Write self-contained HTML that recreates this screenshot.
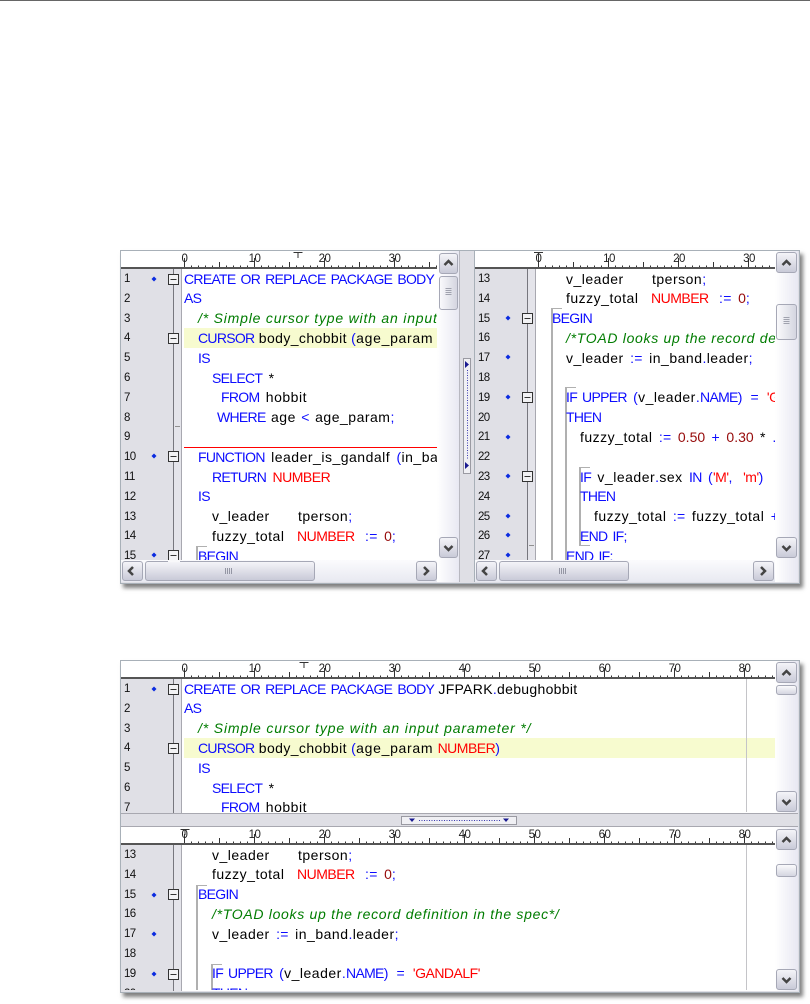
<!DOCTYPE html>
<html><head><meta charset="utf-8"><style>
html,body{margin:0;padding:0;background:#fff;width:810px;height:1004px;overflow:hidden}
#w{position:relative;width:810px;height:1004px;overflow:hidden;font-family:"Liberation Sans",sans-serif}
.a{position:absolute}
.clip{position:absolute;left:0;top:0;width:810px;height:1004px}
.t{position:absolute;white-space:pre;font-size:14px;line-height:20px;color:#000;letter-spacing:.5px;word-spacing:2px;margin-top:-.4px;filter:blur(.35px)}
.k{color:#0c0cff;letter-spacing:-.7px;word-spacing:1.8px}
.r{color:#ff0000;letter-spacing:-.5px}
.n{color:#960a0a;letter-spacing:0}
.g{color:#007c00;font-style:italic;letter-spacing:.8px;word-spacing:0}
.p{color:#0c0cff;letter-spacing:.3px}
.e{margin:0 1.5px}
.ln{position:absolute;font-size:11.5px;line-height:20px;color:#111;letter-spacing:-.6px;white-space:pre;filter:blur(.25px)}
.track-v{position:absolute;background:linear-gradient(90deg,#fff,#e8e8f2)}
.track-h{position:absolute;background:linear-gradient(180deg,#fbfbfd,#e8e9f1)}
.btn{position:absolute;box-sizing:border-box;border:1px solid #a6a8b6;border-radius:3px;background:linear-gradient(180deg,#f4f4f8,#c9cad8)}
.gut{position:absolute;background:#e0e0e6}
.band{position:absolute;background:#e4e4ea}
</style></head><body><div id="w">
<div class="a" style="left:0;top:0;width:810px;height:1px;background:#666"></div>

<!-- group frames -->
<div class="a" style="left:120px;top:250px;width:678px;height:332px;background:#dfdfe5;border:1px solid #a8b0b8;box-shadow:3px 4px 4px rgba(0,0,0,.5)"></div>
<div class="a" style="left:120px;top:660px;width:678px;height:331px;background:#dfdfe5;border:1px solid #a8b0b8;box-shadow:3px 4px 4px rgba(0,0,0,.5)"></div>

<!-- pane backgrounds -->
<div class="a" style="left:121px;top:251px;width:316px;height:310px;background:#fff"></div>
<div class="a" style="left:459px;top:251px;width:1px;height:331px;background:#b8b8c0"></div>
<div class="a" style="left:474px;top:251px;width:1px;height:331px;background:#a8b0b8"></div>
<div class="a" style="left:475px;top:251px;width:300px;height:310px;background:#fff"></div>
<div class="a" style="left:121px;top:661px;width:654px;height:152px;background:#fff"></div>
<div class="a" style="left:121px;top:827px;width:654px;height:164px;background:#fff"></div>
<div class="a" style="left:121px;top:813px;width:677px;height:1px;background:#a8a8b0"></div>
<div class="a" style="left:121px;top:826px;width:677px;height:1px;background:#a8a8b0"></div>

<!-- gutters -->
<div class="gut" style="left:121px;top:269px;width:52px;height:291px"></div>
<div class="band" style="left:174px;top:269px;width:7px;height:291px"></div>
<div class="a" style="left:173px;top:269px;width:1px;height:291px;background:#77777e"></div>
<div class="a" style="left:181px;top:269px;width:1px;height:291px;background:#a8a8b0"></div>

<div class="gut" style="left:475px;top:269px;width:52px;height:291px"></div>
<div class="band" style="left:528px;top:269px;width:7px;height:291px"></div>
<div class="a" style="left:527px;top:269px;width:1px;height:291px;background:#77777e"></div>
<div class="a" style="left:535px;top:269px;width:1px;height:291px;background:#a8a8b0"></div>

<div class="gut" style="left:121px;top:679px;width:52px;height:134px"></div>
<div class="band" style="left:174px;top:679px;width:7px;height:134px"></div>
<div class="a" style="left:173px;top:679px;width:1px;height:134px;background:#77777e"></div>
<div class="a" style="left:181px;top:679px;width:1px;height:134px;background:#a8a8b0"></div>

<div class="gut" style="left:121px;top:845px;width:52px;height:146px"></div>
<div class="band" style="left:174px;top:845px;width:7px;height:146px"></div>
<div class="a" style="left:173px;top:845px;width:1px;height:146px;background:#77777e"></div>
<div class="a" style="left:181px;top:845px;width:1px;height:146px;background:#a8a8b0"></div>

<!-- PANE 1 -->
<div class="clip" style="clip-path:inset(269px 373px 444px 121px)">
<div class="a" style="left:184px;top:328px;width:253px;height:20px;background:#f7fbcf"></div>
<div class="a" style="left:184px;top:447px;width:253px;height:1px;background:#ff0000"></div>
<div class="a" style="left:196px;top:546px;width:2px;height:14px;background:#b0b0b0"></div>
<div class="a" style="left:196px;top:546px;width:11px;height:1px;background:#b0b0b0"></div>
<div class="a" style="left:175px;top:426px;width:5px;height:1px;background:#909090"></div>
<div class="ln" style="left:124px;top:269px">1</div>
<div class="ln" style="left:124px;top:288.8px">2</div>
<div class="ln" style="left:124px;top:308.6px">3</div>
<div class="ln" style="left:124px;top:328.4px">4</div>
<div class="ln" style="left:124px;top:348.2px">5</div>
<div class="ln" style="left:124px;top:368px">6</div>
<div class="ln" style="left:124px;top:387.8px">7</div>
<div class="ln" style="left:124px;top:407.6px">8</div>
<div class="ln" style="left:124px;top:427.4px">9</div>
<div class="ln" style="left:124px;top:447.2px">10</div>
<div class="ln" style="left:124px;top:467px">11</div>
<div class="ln" style="left:124px;top:486.8px">12</div>
<div class="ln" style="left:124px;top:506.6px">13</div>
<div class="ln" style="left:124px;top:526.4px">14</div>
<div class="ln" style="left:124px;top:546.2px">15</div>
<div class="t" style="left:184px;top:269px"><span class="k">CREATE OR REPLACE PACKAGE BODY</span></div>
<div class="t" style="left:184px;top:288.8px"><span class="k">AS</span></div>
<div class="t" style="left:198px;top:308.6px"><span class="g">/* Simple cursor type with an input</span></div>
<div class="t" style="left:198px;top:328.4px;word-spacing:0;letter-spacing:.4px"><span class="k">CURSOR</span> body_chobbit <span class="p">(</span><span style="letter-spacing:.7px">age_param</span></div>
<div class="t" style="left:198px;top:348.2px"><span class="k">IS</span></div>
<div class="t" style="left:212px;top:368px"><span class="k">SELECT</span> *</div>
<div class="t" style="left:221px;top:387.8px"><span class="k">FROM</span> hobbit</div>
<div class="t" style="left:217px;top:407.6px;word-spacing:1px"><span class="k">WHERE</span> age <span class="p">&lt;</span> age_param<span class="p">;</span></div>
<div class="t" style="left:198px;top:447.2px"><span class="k">FUNCTION</span> leader_is_gandalf <span class="p">(</span>in_band</div>
<div class="t" style="left:212px;top:467px"><span class="k">RETURN</span> <span class="r">NUMBER</span></div>
<div class="t" style="left:198px;top:486.8px"><span class="k">IS</span></div>
<div class="t" style="left:212px;top:506.6px">v_leader</div>
<div class="t" style="left:298px;top:506.6px">tperson<span class="p">;</span></div>
<div class="t" style="left:212px;top:526.4px">fuzzy_total</div>
<div class="t" style="left:297px;top:526.4px"><span class="r">NUMBER</span></div>
<div class="t" style="left:365px;top:526.4px"><span class="p">:=</span> <span class="n">0</span><span class="p">;</span></div>
<div class="t" style="left:198px;top:546.2px"><span class="k">BEGIN</span></div>
</div>

<!-- PANE 2 -->
<div class="clip" style="clip-path:inset(269px 35px 444px 475px)">
<div class="a" style="left:551px;top:308px;width:2px;height:252px;background:#b0b0b0"></div>
<div class="a" style="left:551px;top:308px;width:11px;height:1px;background:#b0b0b0"></div>
<div class="a" style="left:565px;top:387px;width:2px;height:173px;background:#b0b0b0"></div>
<div class="a" style="left:565px;top:387px;width:11px;height:1px;background:#b0b0b0"></div>
<div class="a" style="left:579px;top:467px;width:2px;height:78px;background:#b0b0b0"></div>
<div class="a" style="left:579px;top:467px;width:11px;height:1px;background:#b0b0b0"></div>
<div class="a" style="left:579px;top:545px;width:11px;height:1px;background:#b0b0b0"></div>
<div class="a" style="left:529px;top:545px;width:5px;height:1px;background:#909090"></div>
<div class="ln" style="left:478px;top:269px">13</div>
<div class="ln" style="left:478px;top:288.8px">14</div>
<div class="ln" style="left:478px;top:308.6px">15</div>
<div class="ln" style="left:478px;top:328.4px">16</div>
<div class="ln" style="left:478px;top:348.2px">17</div>
<div class="ln" style="left:478px;top:368px">18</div>
<div class="ln" style="left:478px;top:387.8px">19</div>
<div class="ln" style="left:478px;top:407.6px">20</div>
<div class="ln" style="left:478px;top:427.4px">21</div>
<div class="ln" style="left:478px;top:447.2px">22</div>
<div class="ln" style="left:478px;top:467px">23</div>
<div class="ln" style="left:478px;top:486.8px">24</div>
<div class="ln" style="left:478px;top:506.6px">25</div>
<div class="ln" style="left:478px;top:526.4px">26</div>
<div class="ln" style="left:478px;top:546.2px">27</div>
<div class="t" style="left:566px;top:269px">v_leader</div>
<div class="t" style="left:652px;top:269px">tperson<span class="p">;</span></div>
<div class="t" style="left:566px;top:288.8px">fuzzy_total</div>
<div class="t" style="left:651px;top:288.8px"><span class="r">NUMBER</span></div>
<div class="t" style="left:719px;top:288.8px"><span class="p">:=</span> <span class="n">0</span><span class="p">;</span></div>
<div class="t" style="left:552px;top:308.6px"><span class="k">BEGIN</span></div>
<div class="t" style="left:566px;top:328.4px"><span class="g" style="letter-spacing:.7px">/*TOAD looks up the record definition</span></div>
<div class="t" style="left:566px;top:348.2px">v_leader <span class="p">:=</span> in_band<span class="p">.</span>leader<span class="p">;</span></div>
<div class="t" style="left:566px;top:387.8px"><span class="k">IF UPPER</span> <span class="p">(</span>v_leader<span class="p">.</span><span class="k">NAME</span><span class="p">)</span> <span class="p e">=</span> <span class="r">'GANDALF'</span></div>
<div class="t" style="left:566px;top:407.6px"><span class="k">THEN</span></div>
<div class="t" style="left:580px;top:427.4px">fuzzy_total <span class="p">:=</span> <span class="n">0.50</span> <span class="p">+</span> <span class="n">0.30</span> * <span class="p">.</span></div>
<div class="t" style="left:580px;top:467px"><span class="k">IF</span> v_leader<span class="p">.</span>sex <span class="k">IN</span> <span class="p">(</span><span class="r">'M'</span><span class="p">,</span> <span class="r" style="margin-left:4px">'m'</span><span class="p">)</span></div>
<div class="t" style="left:580px;top:486.8px"><span class="k">THEN</span></div>
<div class="t" style="left:594px;top:506.6px">fuzzy_total <span class="p">:=</span> fuzzy_total <span class="p">+</span></div>
<div class="t" style="left:580px;top:526.4px"><span class="k">END IF</span><span class="p">;</span></div>
<div class="t" style="left:566px;top:546.2px"><span class="k">END IF</span><span class="p">;</span></div>
</div>

<!-- PANE 3 -->
<div class="clip" style="clip-path:inset(679px 35px 192px 121px)">
<div class="a" style="left:184px;top:738px;width:591px;height:20px;background:#f7fbcf"></div>
<div class="a" style="left:746px;top:679px;width:1px;height:134px;background:#c4c4c8"></div>
<div class="ln" style="left:124px;top:679px">1</div>
<div class="ln" style="left:124px;top:698.8px">2</div>
<div class="ln" style="left:124px;top:718.6px">3</div>
<div class="ln" style="left:124px;top:738.4px">4</div>
<div class="ln" style="left:124px;top:758.2px">5</div>
<div class="ln" style="left:124px;top:778px">6</div>
<div class="ln" style="left:124px;top:797.8px">7</div>
<div class="t" style="left:184px;top:679px;letter-spacing:.3px;word-spacing:0"><span class="k" style="word-spacing:1.8px">CREATE OR REPLACE PACKAGE BODY</span> JFPARK<span class="p">.</span>debughobbit</div>
<div class="t" style="left:184px;top:698.8px"><span class="k">AS</span></div>
<div class="t" style="left:198px;top:718.6px"><span class="g" style="letter-spacing:.85px">/* Simple cursor type with an input parameter */</span></div>
<div class="t" style="left:198px;top:738.4px;word-spacing:0;letter-spacing:.4px"><span class="k">CURSOR</span> body_chobbit <span class="p">(</span><span style="letter-spacing:.7px">age_param</span> <span class="r">NUMBER</span><span class="p">)</span></div>
<div class="t" style="left:198px;top:758.2px"><span class="k">IS</span></div>
<div class="t" style="left:212px;top:778px"><span class="k">SELECT</span> *</div>
<div class="t" style="left:221px;top:797.8px"><span class="k">FROM</span> hobbit</div>
</div>

<!-- PANE 4 -->
<div class="clip" style="clip-path:inset(845px 35px 14px 121px)">
<div class="a" style="left:746px;top:845px;width:1px;height:146px;background:#c4c4c8"></div>
<div class="a" style="left:196px;top:885px;width:2px;height:106px;background:#b0b0b0"></div>
<div class="a" style="left:196px;top:885px;width:11px;height:1px;background:#b0b0b0"></div>
<div class="a" style="left:211px;top:964px;width:2px;height:27px;background:#b0b0b0"></div>
<div class="a" style="left:211px;top:964px;width:11px;height:1px;background:#b0b0b0"></div>
<div class="ln" style="left:124px;top:845px">13</div>
<div class="ln" style="left:124px;top:864.8px">14</div>
<div class="ln" style="left:124px;top:884.6px">15</div>
<div class="ln" style="left:124px;top:904.4px">16</div>
<div class="ln" style="left:124px;top:924.2px">17</div>
<div class="ln" style="left:124px;top:944px">18</div>
<div class="ln" style="left:124px;top:963.8px">19</div>
<div class="ln" style="left:124px;top:983.6px">20</div>
<div class="t" style="left:212px;top:845px">v_leader</div>
<div class="t" style="left:298px;top:845px">tperson<span class="p">;</span></div>
<div class="t" style="left:212px;top:864.8px">fuzzy_total</div>
<div class="t" style="left:297px;top:864.8px"><span class="r">NUMBER</span></div>
<div class="t" style="left:365px;top:864.8px"><span class="p">:=</span> <span class="n">0</span><span class="p">;</span></div>
<div class="t" style="left:198px;top:884.6px"><span class="k">BEGIN</span></div>
<div class="t" style="left:212px;top:904.4px"><span class="g" style="letter-spacing:.7px">/*TOAD looks up the record definition in the spec*/</span></div>
<div class="t" style="left:212px;top:924.2px">v_leader <span class="p">:=</span> in_band<span class="p">.</span>leader<span class="p">;</span></div>
<div class="t" style="left:212px;top:963.8px"><span class="k">IF UPPER</span> <span class="p">(</span>v_leader<span class="p">.</span><span class="k">NAME</span><span class="p">)</span> <span class="p e">=</span> <span class="r">'GANDALF'</span></div>
<div class="t" style="left:212px;top:983.6px"><span class="k">THEN</span></div>
</div>

<!-- scroll tracks -->
<div class="track-v" style="left:437px;top:251px;width:22px;height:331px"></div>
<div class="track-v" style="left:775px;top:251px;width:23px;height:331px"></div>
<div class="track-h" style="left:121px;top:560px;width:316px;height:22px"></div>
<div class="track-h" style="left:475px;top:560px;width:300px;height:22px"></div>
<div class="track-v" style="left:775px;top:661px;width:23px;height:152px"></div>
<div class="track-v" style="left:775px;top:827px;width:23px;height:164px"></div>

<!-- thumbs -->
<div class="btn" style="left:439px;top:276px;width:19px;height:34px;background:linear-gradient(90deg,#fafafc,#d4d5e0)"></div>
<div class="btn" style="left:776px;top:304px;width:21px;height:36px;background:linear-gradient(90deg,#fafafc,#d4d5e0)"></div>
<div class="btn" style="left:776px;top:685px;width:21px;height:10px;background:linear-gradient(180deg,#fafafc,#d4d5e0)"></div>
<div class="btn" style="left:776px;top:864px;width:21px;height:13px;background:linear-gradient(180deg,#fafafc,#d4d5e0)"></div>
<div class="btn" style="left:145px;top:561px;width:170px;height:20px;background:linear-gradient(180deg,#f4f4f8,#c9cad8)"></div>
<div class="btn" style="left:499px;top:561px;width:130px;height:20px;background:linear-gradient(180deg,#f4f4f8,#c9cad8)"></div>

<!-- buttons -->
<div class="btn" style="left:439px;top:253px;width:19px;height:21px"></div>
<div class="btn" style="left:439px;top:537px;width:19px;height:21px"></div>
<div class="btn" style="left:776px;top:252px;width:21px;height:21px"></div>
<div class="btn" style="left:776px;top:537px;width:21px;height:21px"></div>
<div class="btn" style="left:776px;top:662px;width:21px;height:21px"></div>
<div class="btn" style="left:776px;top:791px;width:21px;height:21px"></div>
<div class="btn" style="left:776px;top:829px;width:21px;height:21px"></div>
<div class="btn" style="left:776px;top:969px;width:21px;height:21px"></div>
<div class="btn" style="left:122px;top:561px;width:21px;height:20px"></div>
<div class="btn" style="left:416px;top:561px;width:21px;height:20px"></div>
<div class="btn" style="left:476px;top:561px;width:21px;height:20px"></div>
<div class="btn" style="left:753px;top:561px;width:21px;height:20px"></div>

<!-- splitter grips -->
<div class="a" style="left:463px;top:358px;width:8px;height:116px;box-sizing:border-box;border:1px solid #9a9aa2;background:#f0f0f4"></div>
<div class="a" style="left:401px;top:816px;width:116px;height:9px;box-sizing:border-box;border:1px solid #9a9aa2;background:#f0f0f4"></div>

<svg class="a" style="left:0;top:0" width="810" height="1004" viewBox="0 0 810 1004">
<defs>
<pattern id="tk" width="70" height="10" patternUnits="userSpaceOnUse">
<path d="M0.5 0V10M7.5 7.5V10M14.5 7.5V10M21.5 7.5V10M28.5 7.5V10M35.5 4V10M42.5 7.5V10M49.5 7.5V10M56.5 7.5V10M63.5 7.5V10" stroke="#333" stroke-width="1" fill="none"/>
</pattern>
<pattern id="p1" width="70" height="10" patternUnits="userSpaceOnUse" patternTransform="translate(184 258)"><rect width="70" height="10" fill="url(#tk)"/></pattern>
<pattern id="p2" width="70" height="10" patternUnits="userSpaceOnUse" patternTransform="translate(538 258)"><rect width="70" height="10" fill="url(#tk)"/></pattern>
<pattern id="p3" width="70" height="10" patternUnits="userSpaceOnUse" patternTransform="translate(184 668)"><rect width="70" height="10" fill="url(#tk)"/></pattern>
<pattern id="p4" width="70" height="10" patternUnits="userSpaceOnUse" patternTransform="translate(184 834)"><rect width="70" height="10" fill="url(#tk)"/></pattern>
<g id="dm"><path d="M0 -2.5L2.5 0L0 2.5L-2.5 0Z" fill="#0a2be0"/></g>
<g id="fb"><rect x="0.5" y="0.5" width="10" height="10" fill="#f2f2f4" stroke="#333"/><path d="M2.5 5.5H8.5" stroke="#333"/></g>
<path id="up" d="M-4 2L0 -2L4 2" stroke="#444" stroke-width="2.5" fill="none"/>
<path id="dn" d="M-4 -2L0 2L4 -2" stroke="#444" stroke-width="2.5" fill="none"/>
<path id="lf" d="M2 -4L-2 0L2 4" stroke="#444" stroke-width="2.5" fill="none"/>
<path id="rt" d="M-2 -4L2 0L-2 4" stroke="#444" stroke-width="2.5" fill="none"/>
<g id="gv"><path d="M-3 -3.5H3M-3 -1.5H3M-3 .5H3M-3 2.5H3" stroke="#a0a2ae"/></g>
<g id="gh"><path d="M-3.5 -3V3M-1.5 -3V3M.5 -3V3M2.5 -3V3" stroke="#9496a4"/></g>
</defs>

<!-- rulers -->
<rect x="184" y="258" width="253" height="10" fill="url(#p1)"/>
<rect x="121" y="267" width="316" height="2" fill="#555"/>
<rect x="538" y="258" width="237" height="10" fill="url(#p2)"/>
<rect x="475" y="267" width="300" height="2" fill="#555"/>
<rect x="184" y="668" width="591" height="10" fill="url(#p3)"/>
<rect x="121" y="677" width="654" height="2" fill="#555"/>
<rect x="184" y="834" width="591" height="10" fill="url(#p4)"/>
<rect x="121" y="843" width="654" height="2" fill="#555"/>

<g font-family="'Liberation Sans',sans-serif" font-size="11.5" fill="#222" text-anchor="middle" letter-spacing="-.5">
<text x="184.5" y="262">0</text><text x="254.5" y="262">10</text><text x="324.5" y="262">20</text><text x="394.5" y="262">30</text>
<text x="538.5" y="262">0</text><text x="609" y="262">10</text><text x="679" y="262">20</text><text x="749" y="262">30</text>
<text x="184.5" y="672">0</text><text x="254.5" y="672">10</text><text x="324.5" y="672">20</text><text x="394.5" y="672">30</text><text x="464.5" y="672">40</text><text x="534.5" y="672">50</text><text x="604.5" y="672">60</text><text x="674.5" y="672">70</text><text x="744.5" y="672">80</text>
<text x="184.5" y="838">0</text><text x="254.5" y="838">10</text><text x="324.5" y="838">20</text><text x="394.5" y="838">30</text><text x="464.5" y="838">40</text><text x="534.5" y="838">50</text><text x="604.5" y="838">60</text><text x="674.5" y="838">70</text><text x="744.5" y="838">80</text>
</g>
<!-- tab markers -->
<path d="M293.5 252.5H302.5M298 252.5V258" stroke="#333" fill="none"/>
<path d="M534 252.5H543M538.5 252.5V258" stroke="#333" fill="none"/>
<path d="M299.5 662.5H308.5M304 662.5V668" stroke="#333" fill="none"/>
<path d="M180.5 829.5H189.5M185 829.5V835" stroke="#333" fill="none"/>

<!-- diamonds -->
<use href="#dm" x="154" y="279"/><use href="#dm" x="154" y="456"/><use href="#dm" x="154" y="555"/>
<use href="#dm" x="508" y="318"/><use href="#dm" x="508" y="357"/><use href="#dm" x="508" y="397"/><use href="#dm" x="508" y="437"/><use href="#dm" x="508" y="476"/><use href="#dm" x="508" y="516"/><use href="#dm" x="508" y="535"/><use href="#dm" x="508" y="555"/>
<use href="#dm" x="154" y="689"/>
<use href="#dm" x="154" y="895"/><use href="#dm" x="154" y="934"/><use href="#dm" x="154" y="974"/>

<!-- fold boxes -->
<use href="#fb" x="168" y="274"/><use href="#fb" x="168" y="333"/><use href="#fb" x="168" y="451"/>
<use href="#fb" x="522" y="313"/><use href="#fb" x="522" y="392"/><use href="#fb" x="522" y="471"/>
<use href="#fb" x="168" y="684"/><use href="#fb" x="168" y="743"/>
<use href="#fb" x="168" y="889"/><use href="#fb" x="168" y="969"/>
<use href="#fb" x="168" y="550"/>
<rect x="168" y="560" width="12" height="2" fill="#f8f8fa"/>

<!-- chevrons -->
<use href="#up" x="448.5" y="263"/><use href="#dn" x="448.5" y="548"/>
<use href="#up" x="786.5" y="263"/><use href="#dn" x="786.5" y="548"/>
<use href="#up" x="786.5" y="673"/><use href="#dn" x="786.5" y="802"/>
<use href="#up" x="786.5" y="840"/><use href="#dn" x="786.5" y="980"/>
<use href="#lf" x="131" y="571"/><use href="#rt" x="426" y="571"/>
<use href="#lf" x="485" y="571"/><use href="#rt" x="763" y="571"/>

<!-- thumb grips -->
<use href="#gv" x="448.5" y="292"/><use href="#gv" x="786.5" y="321"/>
<use href="#gh" x="229" y="571"/><use href="#gh" x="563" y="571"/>

<!-- splitter grip glyphs -->
<path d="M465 361L469 364.5L465 368ZM465 462L469 465.5L465 469Z" fill="#1a1a90"/>
<path d="M467.5 370V460" stroke="#3a3ab0" stroke-dasharray="1 1.5" fill="none"/>
<path d="M409 818.5H415L412 822ZM503 818.5H509L506 822Z" fill="#1a1a90"/>
<path d="M419 820.5H500" stroke="#3a3ab0" stroke-dasharray="1 1.5" fill="none"/>
</svg>
</div></body></html>
